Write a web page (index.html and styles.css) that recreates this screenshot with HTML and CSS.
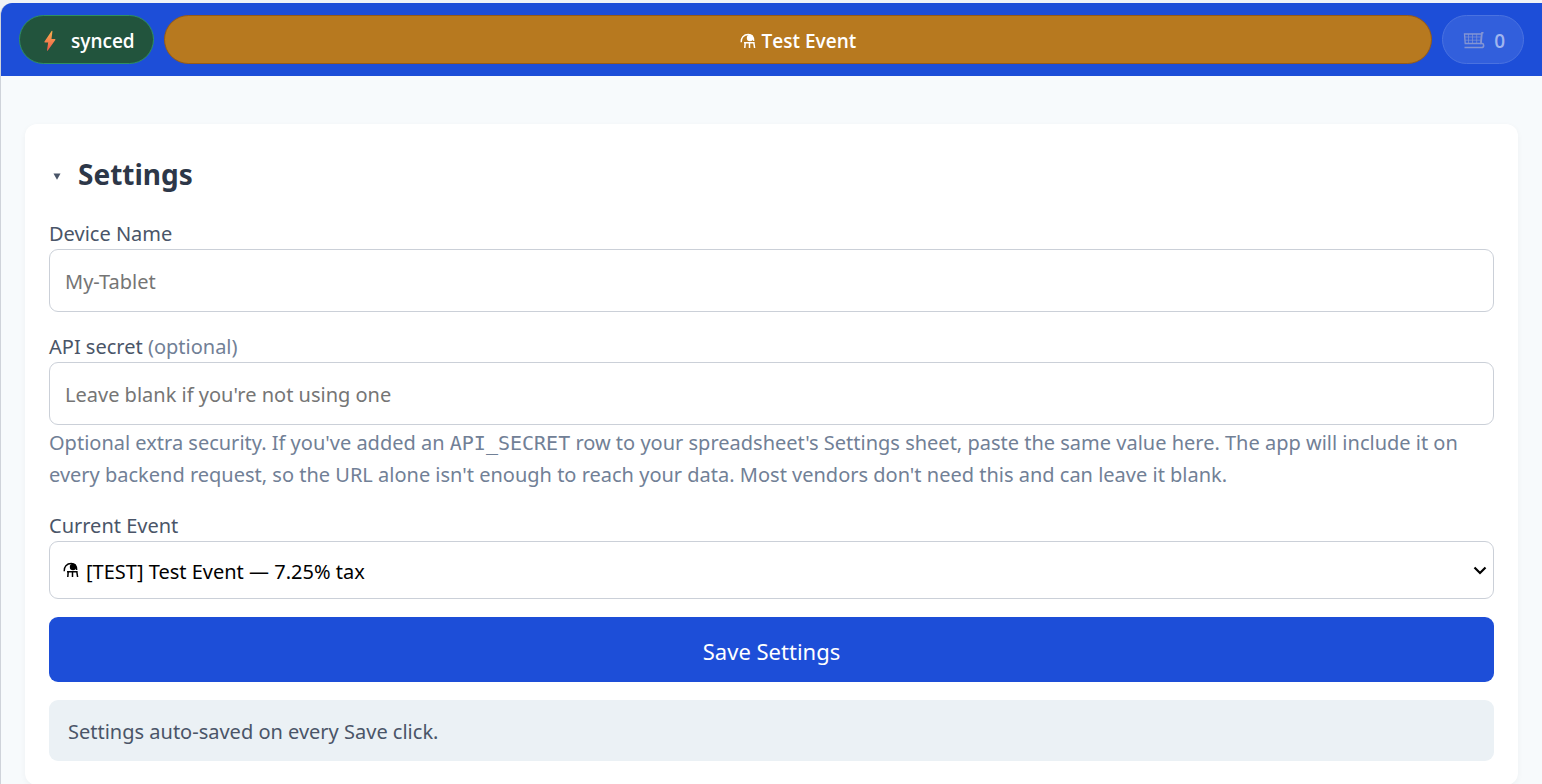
FILE: index.html
```html
<!DOCTYPE html>
<html lang="en">
<head>
<meta charset="utf-8">
<meta name="viewport" content="width=device-width, initial-scale=1">
<title>Settings</title>
<link rel="stylesheet" href="styles.css">
</head>
<body>
<svg class="defs" aria-hidden="true">
  <symbol id="flask" viewBox="0 0 16 16">
    <path d="M1.200 9.200C.8 4.800 3.800 1.500 8.200 1.500c3.500 0 5.500 2.500 5.500 6.500" fill="none" stroke="currentColor" stroke-width="1.400"/>
    <circle cx="10" cy="5" r="3.200" fill="currentColor"/>
    <path d="M4 9.700h10.500M5.200 9.700l-.4 5.300M9.500 9.700v5.300M13.800 9.700l.8 5.300" fill="none" stroke="currentColor" stroke-width="1.500"/>
  </symbol>
</svg>
<div class="app">
  <header class="topbar">
    <button class="pill pill-sync" type="button">
      <svg class="bolt" viewBox="0 0 14 22" aria-hidden="true">
        <defs><linearGradient id="boltFill" x1="0" y1="0" x2="0" y2="1"><stop offset="0" stop-color="#f9b04d"/><stop offset="1" stop-color="#ef5a4c"/></linearGradient></defs>
        <path d="M8.600 1 1.500 11.600q-.5.9.5.9h3.200L4 20.200q0 1 .8.2L12.300 10q.5-.9-.5-.9H8.500L9.400 1.400q0-1-.8-.4Z" fill="url(#boltFill)"/>
      </svg>
      <span>synced</span>
    </button>
    <button class="pill pill-event" type="button">
      <svg class="flask" aria-hidden="true"><use href="#flask"/></svg>
      <span>Test Event</span>
    </button>
    <button class="pill pill-cart" type="button" aria-label="Cart, 0 items" disabled>
      <svg class="cart" viewBox="0 0 22 18" fill="none" stroke="currentColor" aria-hidden="true">
        <path d="M20.500.8h-1.500l-1 10.700h1.200c2 .2 2 4-.5 4H1.500" stroke-width="1.600"/>
        <path d="M1.500 2h17l-.7 9.500H2.200Z" stroke-width="1.300"/>
        <path d="M1.700 5h16.200M2 8.200h15.700M5.500 2v9.500M9.500 2v9.500M13.700 2v9.500" stroke-width=".7"/>
      </svg>
      <span>0</span>
    </button>
  </header>
  <main class="content">
    <form class="card">
      <h2 class="title"><button class="toggle" type="button" aria-expanded="true"><svg class="caret" viewBox="0 0 8 7" aria-hidden="true"><path d="M.5.5h7L4 6.800Z" fill="currentColor"/></svg>Settings</button></h2>
      <div class="field">
        <label for="device">Device Name</label>
        <input class="control" id="device" type="text" placeholder="My-Tablet">
      </div>
      <div class="field">
        <label for="secret">API secret <span class="muted">(optional)</span></label>
        <input class="control" id="secret" type="password" placeholder="Leave blank if you're not using one">
        <p class="help">Optional extra security. If you've added an <code>API_SECRET</code> row to your spreadsheet's Settings sheet, paste the same value here. The app will include it on every backend request, so the URL alone isn't enough to reach your data. Most vendors don't need this and can leave it blank.</p>
      </div>
      <div class="field">
        <label for="event">Current Event</label>
        <div class="select-wrap">
          <select class="control select" id="event"><option>[TEST] Test Event — 7.25% tax</option></select>
          <svg class="flask select-flask" aria-hidden="true"><use href="#flask"/></svg>
          <svg class="chevron" viewBox="0 0 14 9" aria-hidden="true"><path d="m1.500 1.500 5.500 5.500 5.500-5.500" fill="none" stroke="currentColor" stroke-width="2.200"/></svg>
        </div>
      </div>
      <button class="save" type="button">Save Settings</button>
      <p class="note">Settings auto-saved on every Save click.</p>
    </form>
  </main>
</div>
</body>
</html>
```
FILE: styles.css
```css
* { box-sizing: border-box; }
html { background: #f1f3f6; }
body {
  margin: 0;
  padding-top: 3px;
  font-family: "Noto Sans", "Open Sans", sans-serif;
  font-size: 20px;
  color: #4a5568;
}
button, input, select { font: inherit; }
.defs { position: absolute; width: 0; height: 0; }
.app {
  border-left: 1px solid #cfd3da;
  border-top-left-radius: 12px;
  background: #f7fafc;
  overflow: hidden;
}
.topbar {
  display: flex;
  gap: 10px;
  padding: 12px 18px;
  background: #1d4ed8;
}
.pill {
  display: flex;
  align-items: center;
  justify-content: center;
  height: 49px;
  padding: 2px 18px 0;
  border: 1px solid;
  border-radius: 25px;
  font-family: "Open Sans", "Noto Sans", sans-serif;
  font-size: 19px;
  font-weight: 600;
  line-height: 24px;
  color: #fff;
}
.pill-sync { gap: 14px; background: #22543d; border-color: #2f8f62; }
.pill-event { flex: 1; gap: 6px; background: #b7791f; border-color: #975a16; }
.pill-cart { gap: 9px; background: #325fdc; border-color: #4a72e0; color: #a0b5ef; }
.bolt { width: 14px; height: 22px; margin-left: 5px; }
.flask { width: 16px; height: 16px; }
.cart { width: 22px; height: 18px; margin-left: 2px; color: #8495d3; }
.content { padding: 48px 24px; }
.card {
  display: flex;
  flex-direction: column;
  gap: 18px;
  padding: 24px;
  border-radius: 12px;
  background: #fff;
  box-shadow: 0 2px 6px rgba(0, 0, 0, 0.04);
}
.title { margin: 0; font-size: 28px; line-height: 51px; color: #2d3748; }
.toggle {
  display: flex;
  align-items: center;
  gap: 17px;
  padding: 1px 0 0 4px;
  border: 0;
  background: none;
  font-weight: 700;
  line-height: 50px;
  color: inherit;
}
.caret { width: 8px; height: 7px; margin-top: 5px; color: #4a5568; }
.field { display: flex; flex-direction: column; }
label { padding-top: 2px; line-height: 30px; }
.muted, .help { color: #718096; }
.control {
  width: 100%;
  height: 63px;
  padding: 2px 15px 0;
  border: 1px solid #cbd0d8;
  border-radius: 9px;
  background: #fff;
}
.control::placeholder { color: #757575; opacity: 1; }
.help { margin: 2px 0 0; line-height: 32px; }
code { font-family: "DejaVu Sans Mono", monospace; font-size: 20px; line-height: 1; }
.select-wrap { position: relative; display: flex; }
.select { height: 58px; padding: 2px 36px 0; appearance: none; color: #000; }
.select-flask, .chevron { position: absolute; top: 0; bottom: 0; margin: auto 0; color: #000; pointer-events: none; }
.select-flask { left: 14px; }
.chevron { right: 7px; width: 14px; height: 9px; }
.save {
  height: 65px;
  padding-top: 3px;
  border: 0;
  border-radius: 9px;
  background: #1d4ed8;
  color: #fff;
  font-size: 22px;
}
.note {
  margin: 0;
  padding: 16px 19px 14px;
  border-radius: 9px;
  background: #ebf1f5;
  line-height: 31px;
}
```
